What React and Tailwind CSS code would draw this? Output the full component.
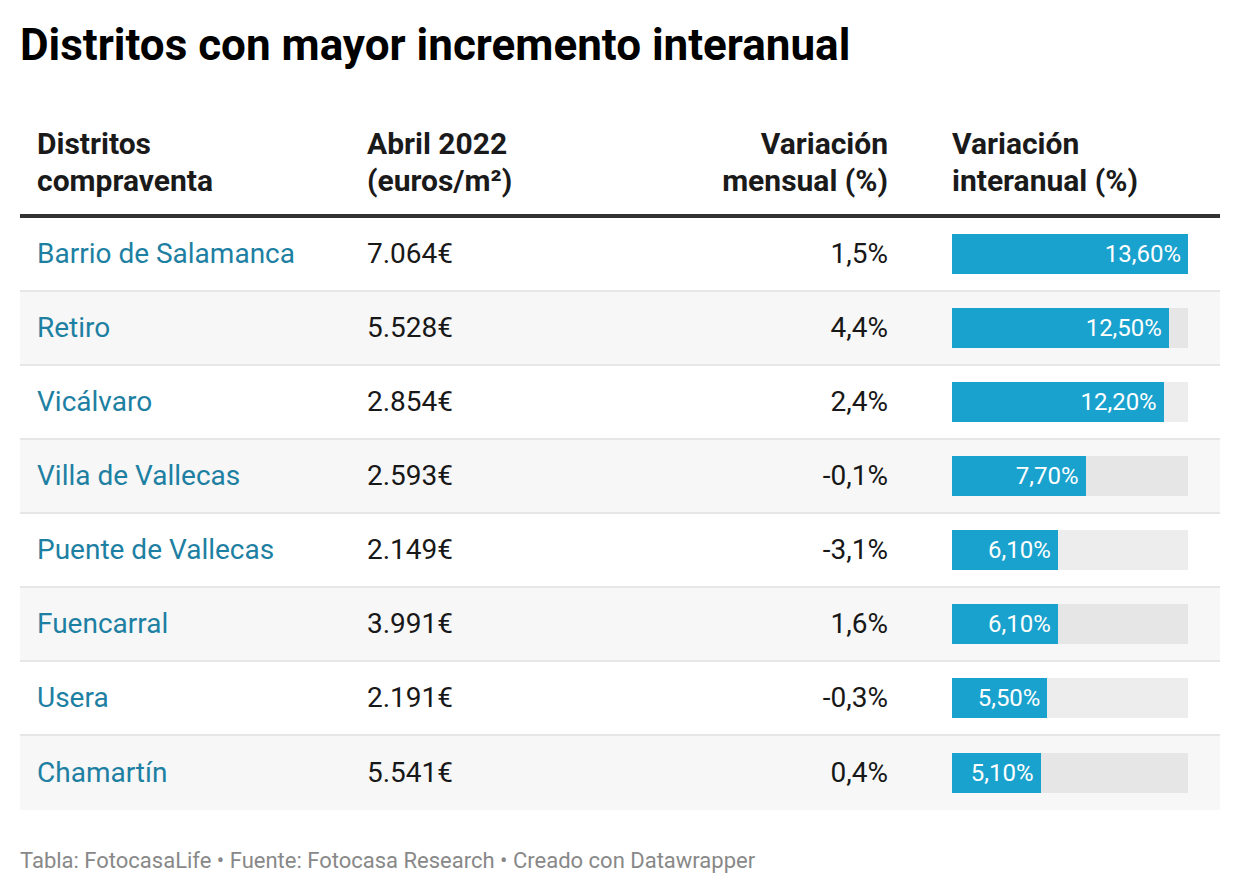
const ROWS = [
  { name: 'Barrio de Salamanca', price: '7.064€', mensual: '1,5%', inter: 13.6, label: '13,60%' },
  { name: 'Retiro', price: '5.528€', mensual: '4,4%', inter: 12.5, label: '12,50%' },
  { name: 'Vicálvaro', price: '2.854€', mensual: '2,4%', inter: 12.2, label: '12,20%' },
  { name: 'Villa de Vallecas', price: '2.593€', mensual: '-0,1%', inter: 7.7, label: '7,70%' },
  { name: 'Puente de Vallecas', price: '2.149€', mensual: '-3,1%', inter: 6.1, label: '6,10%' },
  { name: 'Fuencarral', price: '3.991€', mensual: '1,6%', inter: 6.1, label: '6,10%' },
  { name: 'Usera', price: '2.191€', mensual: '-0,3%', inter: 5.5, label: '5,50%' },
  { name: 'Chamartín', price: '5.541€', mensual: '0,4%', inter: 5.1, label: '5,10%' },
];

const MAX = 13.6;

export default function App() {
  return (
    <div className="w-[1240px] h-[894px] bg-white px-5 pt-[21px] font-['Roboto',sans-serif] text-[#181818]">
      <h1 className="text-[44px] leading-[48px] font-bold text-black">
        Distritos con mayor incremento interanual
      </h1>

      {/* cabecera */}
      <div className="mt-[56px] flex items-end pb-[15px] border-b-[4px] border-[#333333] text-[30px] leading-[37px] font-bold text-[#1a1a1a]">
        <div className="w-[330px] pl-[17px]">Distritos<br />compraventa</div>
        <div className="w-[300px] pl-[17px]">Abril 2022<br />(euros/m²)</div>
        <div className="w-[255px] pr-[17px] text-right">Variación<br />mensual (%)</div>
        <div className="flex-1 pl-[47px]">Variación<br />interanual (%)</div>
      </div>

      {ROWS.map((r, i) => {
        const odd = i % 2 === 1;
        return (
          <div key={r.name}
               className={`flex items-center h-[74px] text-[28px] ${i < ROWS.length - 1 ? 'border-b-2 border-[#e6e6e6]' : ''} ${odd ? 'bg-[#f7f7f7]' : 'bg-white'}`}>
            <div className="w-[330px] pl-[17px] text-[#1d80a2]">{r.name}</div>
            <div className="w-[300px] pl-[17px]">{r.price}</div>
            <div className="w-[255px] pr-[17px] text-right">{r.mensual}</div>
            <div className="flex-1 pl-[47px]">
              <div className={`w-[236px] h-10 ${odd ? 'bg-[#e6e6e6]' : 'bg-[#ededed]'}`}>
                <div className="h-full bg-[#19a2ce] flex items-center justify-end pr-[7px] text-white text-[24px]"
                     style={{ width: `${(r.inter / MAX) * 100}%` }}>
                  {r.label}
                </div>
              </div>
            </div>
          </div>
        );
      })}

      <p className="mt-[34px] text-[22px] text-[#888888]">
        Tabla: FotocasaLife • Fuente: Fotocasa Research • Creado con Datawrapper
      </p>
    </div>
  );
}
